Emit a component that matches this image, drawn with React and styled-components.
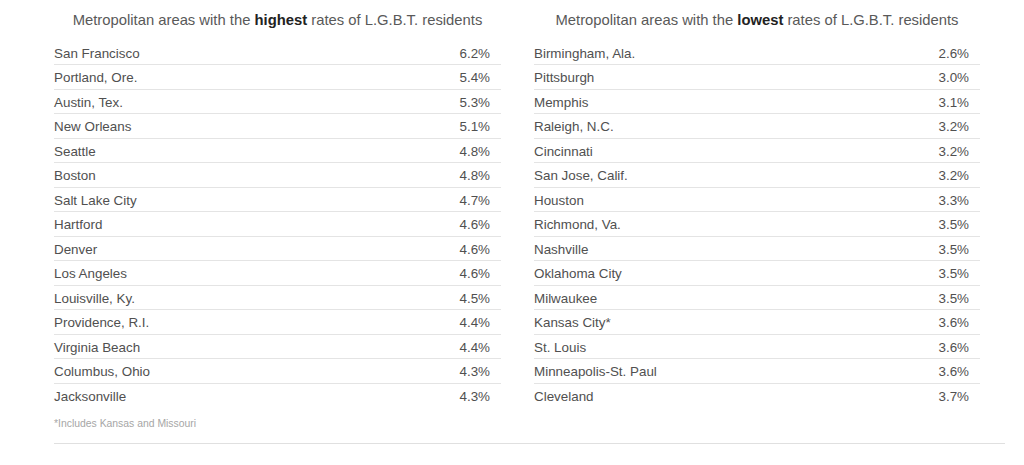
import React from 'react';
import styled, { createGlobalStyle } from 'styled-components';

const GlobalStyle = createGlobalStyle`
  body {
    margin: 0;
    background: #fff;
    font-family: "Liberation Sans", Arial, sans-serif;
  }
`;

const Page = styled.div`
  width: 951px;
  margin-left: 54px;
`;

const Columns = styled.div`
  display: grid;
  grid-template-columns: 447px 446px;
  column-gap: 33px;
`;

const Title = styled.h3`
  margin: 0;
  height: 40.5px;
  display: flex;
  align-items: center;
  justify-content: center;
  font-size: 14.8px;
  font-weight: normal;
  color: #595959;
  b {
    color: #222;
    font-weight: bold;
  }
`;

const Row = styled.div`
  display: flex;
  justify-content: space-between;
  align-items: center;
  height: 24.5px;
  box-sizing: border-box;
  padding: 2px 11px 0 0;
  font-size: 13.4px;
  color: #505050;
  border-bottom: 1px solid ${(p) => (p.last ? 'transparent' : '#e4e4e4')};
`;

const Note = styled.div`
  font-size: 10.4px;
  color: #a6a6a6;
  height: 30px;
  display: flex;
  align-items: center;
`;

const Rule = styled.div`
  margin-top: 5px;
  border-top: 1px solid #e0e0e0;
`;

const highest = [
  ['San Francisco', '6.2%'],
  ['Portland, Ore.', '5.4%'],
  ['Austin, Tex.', '5.3%'],
  ['New Orleans', '5.1%'],
  ['Seattle', '4.8%'],
  ['Boston', '4.8%'],
  ['Salt Lake City', '4.7%'],
  ['Hartford', '4.6%'],
  ['Denver', '4.6%'],
  ['Los Angeles', '4.6%'],
  ['Louisville, Ky.', '4.5%'],
  ['Providence, R.I.', '4.4%'],
  ['Virginia Beach', '4.4%'],
  ['Columbus, Ohio', '4.3%'],
  ['Jacksonville', '4.3%'],
];

const lowest = [
  ['Birmingham, Ala.', '2.6%'],
  ['Pittsburgh', '3.0%'],
  ['Memphis', '3.1%'],
  ['Raleigh, N.C.', '3.2%'],
  ['Cincinnati', '3.2%'],
  ['San Jose, Calif.', '3.2%'],
  ['Houston', '3.3%'],
  ['Richmond, Va.', '3.5%'],
  ['Nashville', '3.5%'],
  ['Oklahoma City', '3.5%'],
  ['Milwaukee', '3.5%'],
  ['Kansas City*', '3.6%'],
  ['St. Louis', '3.6%'],
  ['Minneapolis-St. Paul', '3.6%'],
  ['Cleveland', '3.7%'],
];

const Table = ({ word, rows, note }) => (
  <div>
    <Title>
      <span>
        Metropolitan areas with the <b>{word}</b> rates of L.G.B.T. residents
      </span>
    </Title>
    {rows.map(([city, rate], i) => (
      <Row key={city} last={i === rows.length - 1}>
        <span>{city}</span>
        <span>{rate}</span>
      </Row>
    ))}
    {note && <Note>{note}</Note>}
  </div>
);

export default function App() {
  return (
    <Page>
      <GlobalStyle />
      <Columns>
        <Table word="highest" rows={highest} note="*Includes Kansas and Missouri" />
        <Table word="lowest" rows={lowest} />
      </Columns>
      <Rule />
    </Page>
  );
}
